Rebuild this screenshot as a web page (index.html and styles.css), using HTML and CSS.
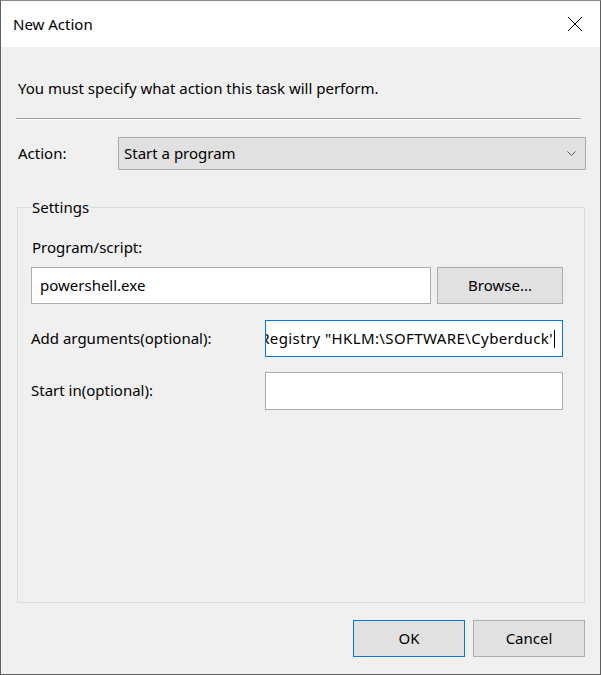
FILE: index.html
```html
<!DOCTYPE html>
<html>
<head>
<meta charset="utf-8">
<link rel="stylesheet" href="styles.css">
</head>
<body>
<div class="window">
  <div class="titlebar">
    <span class="title">New Action</span>
    <svg class="close" width="16" height="16" viewBox="0 0 16 16"><path d="M1 1 L15 15 M15 1 L1 15" stroke="#000" stroke-width="1" fill="none"/></svg>
  </div>
  <div class="content">
    <p class="intro">You must specify what action this task will perform.</p>
    <div class="sep"></div>
    <div class="action-row">
      <span class="action-label">Action:</span>
      <div class="combo">
        <span>Start a program</span>
        <svg class="chev" width="9" height="5" viewBox="0 0 9 5"><path d="M0.5 0.5 L4.5 4.5 L8.5 0.5" stroke="#555" stroke-width="1" fill="none"/></svg>
      </div>
    </div>
    <fieldset class="group">
      <legend>Settings</legend>
      <div class="prog-label">Program/script:</div>
      <div class="prog-row">
        <div class="input prog-input">powershell.exe</div>
        <div class="btn browse">Browse...</div>
      </div>
      <div class="field-row args-row">
        <span class="field-label">Add arguments(optional):</span>
        <div class="input wide focused"><span class="scroll-text">Registry "HKLM:\SOFTWARE\Cyberduck'</span><span class="caret"></span></div>
      </div>
      <div class="field-row start-row">
        <span class="field-label">Start in(optional):</span>
        <div class="input wide"></div>
      </div>
    </fieldset>
    <div class="buttons">
      <div class="btn ok">OK</div>
      <div class="btn cancel">Cancel</div>
    </div>
  </div>
</div>
</body>
</html>
```

FILE: styles.css
```css
* { box-sizing: border-box; }
html, body { margin: 0; padding: 0; }
body {
  width: 601px;
  height: 675px;
  font-family: "Noto Sans", "Open Sans", sans-serif;
  font-size: 15px;
  color: #000;
  background: #f0f0f0;
}
.window {
  width: 601px;
  height: 675px;
  border: 1px solid #5f5f5f;
  border-top-color: #8a8a8a;
  background: #f0f0f0;
  display: flex;
  flex-direction: column;
}
.titlebar {
  height: 46px;
  background: #fff;
  display: flex;
  align-items: center;
  justify-content: space-between;
  padding: 0 17px 0 12px;
  flex: none;
}
.title {
  font-size: 15px;
  line-height: 20px;
}
.close { display: block; }
.content {
  flex: 1;
  padding: 0 0 0 16px;
  display: flex;
  flex-direction: column;
}
.intro {
  margin: 31px 0 0 1px;
  line-height: 20px;
}
.sep {
  margin: 20px 0 0 -1px;
  width: 565px;
  height: 2px;
  border-top: 1px solid #a0a0a0;
  border-bottom: 1px solid #fff;
}
.action-row {
  margin-top: 17px;
  display: flex;
  align-items: center;
  height: 33px;
}
.action-label {
  width: 100px;
  margin-left: 1px;
  line-height: 20px;
  margin-bottom: 2px;
}
.combo {
  width: 468px;
  height: 33px;
  background: #e1e1e1;
  border: 1px solid #adadad;
  display: flex;
  align-items: center;
  justify-content: space-between;
  padding: 0 9px 1px 5px;
  line-height: 20px;
}
.chev { display: block; }
.group {
  margin: 28px 0 0 0;
  width: 568px;
  height: 405px;
  border: 1px solid #dcdcdc;
  padding: 0 0 0 13px;
  min-width: 0;
}
.group legend {
  margin-left: 0;
  padding: 0 1px;
  line-height: 18px;
}
.prog-label {
  margin: 21px 0 0 1px;
  line-height: 20px;
}
.prog-row {
  margin-top: 10px;
  display: flex;
  gap: 6px;
  height: 37px;
}
.input {
  background: #fff;
  border: 1px solid #adadad;
  height: 37px;
  display: flex;
  align-items: center;
  line-height: 20px;
  overflow: hidden;
  white-space: nowrap;
}
.prog-input {
  width: 400px;
  padding-left: 8px;
  padding-bottom: 2px;
}
.btn {
  background: #e1e1e1;
  border: 1px solid #adadad;
  height: 37px;
  display: flex;
  align-items: center;
  justify-content: center;
  line-height: 20px;
  padding-bottom: 1px;
}
.browse { width: 126px; }
.field-row {
  display: flex;
  align-items: center;
  height: 37px;
}
.args-row { margin-top: 16px; }
.start-row { margin-top: 15px; height: 38px; }
.start-row .input { height: 38px; }
.field-label {
  width: 234px;
  line-height: 20px;
  margin-bottom: 2px;
}
.wide { width: 298px; }
.focused {
  border-color: #0078d7;
  justify-content: flex-end;
  padding-right: 7px;
}
.scroll-text { flex: none; letter-spacing: 0.4px; margin-bottom: 2px; }
.caret {
  flex: none;
  width: 1px;
  height: 18px;
  background: #000;
  margin-left: 1px;
}
.buttons {
  margin-top: 17px;
  display: flex;
  justify-content: flex-end;
  gap: 8px;
  padding-right: 15px;
}
.ok, .cancel { width: 112px; }
.ok { border-color: #0078d7; }
```
